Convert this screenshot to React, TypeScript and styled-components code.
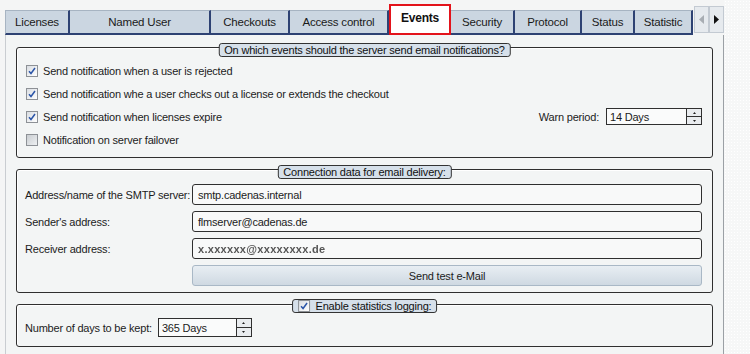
import React from 'react';
import styled, { createGlobalStyle } from 'styled-components';

const GlobalStyle = createGlobalStyle`
  html, body {
    margin: 0;
    padding: 0;
    background: #f4f5f5;
  }
  body {
    font-family: "Liberation Sans", Arial, sans-serif;
    font-size: 11px;
    letter-spacing: -0.2px;
    color: #1c1c1c;
  }
`;

interface TabInfo {
  label: string;
  width: number;
  active?: boolean;
}

const TABS: TabInfo[] = [
  { label: 'Licenses', width: 65 },
  { label: 'Named User', width: 141 },
  { label: 'Checkouts', width: 79 },
  { label: 'Access control', width: 99 },
  { label: 'Events', width: 62, active: true },
  { label: 'Security', width: 64 },
  { label: 'Protocol', width: 67 },
  { label: 'Status', width: 53 },
  { label: 'Statistic', width: 58 },
];

const Screen = styled.div`
  width: 750px;
  height: 354px;
  display: flex;
  overflow: hidden;
  background: #f4f5f5;
`;

const Main = styled.div`
  width: 724px;
  display: flex;
  flex-direction: column;
`;

const SideStrip = styled.div`
  flex: 1;
  background-color: #f6f7f7;
  background-image: radial-gradient(#ffffff 0.6px, transparent 0.7px);
  background-size: 3px 3px;
`;

const TabRow = styled.div`
  height: 35px;
  display: flex;
  align-items: flex-end;
  padding-left: 5px;
`;

const Tab = styled.div<{ $w: number; $first?: boolean }>`
  box-sizing: border-box;
  width: ${(p) => p.$w}px;
  height: 25px;
  background: #cbd6e1;
  border-top: 1px solid #a7b4c2;
  border-left: ${(p) => (p.$first ? '1px solid #a7b4c2' : 'none')};
  border-right: 2px solid #2e4273;
  border-bottom: 2px solid #2e4273;
  display: flex;
  align-items: center;
  justify-content: center;
  font-size: 11.5px;
  color: #1a1a1a;
  white-space: nowrap;
`;

const ActiveTab = styled.div<{ $w: number }>`
  box-sizing: border-box;
  width: ${(p) => p.$w}px;
  height: 31px;
  background: #ffffff;
  border: 2px solid #e3131b;
  display: flex;
  align-items: center;
  justify-content: center;
  padding-bottom: 3px;
  font-size: 12px;
  font-weight: bold;
  color: #111;
`;

const ScrollButtons = styled.div`
  display: flex;
  align-self: flex-end;
  margin-left: 1px;
  margin-bottom: 2px;
  height: 27px;
`;

const ScrollButton = styled.div`
  box-sizing: border-box;
  width: 15px;
  height: 27px;
  background: #e6eaee;
  border: 1px solid #c3cad2;
  display: flex;
  align-items: center;
  justify-content: center;
`;

const Panel = styled.div`
  flex: 1;
  margin-left: 5px;
  background: #f3f5f5;
  border-left: 1px solid #c9cdd1;
  border-right: 1px solid #9ba0a5;
  padding: 12px 10px 0 10px;
  display: flex;
  flex-direction: column;
  gap: 11px;
`;

const Group = styled.div<{ $pad: string }>`
  position: relative;
  border: 1px solid #2f2f2f;
  border-radius: 3px;
  padding: ${(p) => p.$pad};
  box-shadow: inset 1px 1px 0 #ffffff;
`;

const GroupTitle = styled.div<{ $top: number }>`
  position: absolute;
  top: ${(p) => p.$top}px;
  left: 50%;
  transform: translateX(-50%);
  display: flex;
  align-items: center;
  gap: 6px;
  background: #d6e0ea;
  border: 1px solid #333;
  border-radius: 3px;
  padding: 0 5px;
  line-height: 12px;
  white-space: nowrap;
  color: #111;
`;

const CheckRow = styled.div`
  height: 23px;
  display: flex;
  align-items: center;
  gap: 5px;
`;

const Box = styled.span<{ $checked?: boolean }>`
  box-sizing: border-box;
  width: 12px;
  height: 12px;
  flex: none;
  border: 1px solid #8d9196;
  background: ${(p) =>
    p.$checked
      ? 'linear-gradient(135deg, #d9dde2, #ffffff)'
      : 'linear-gradient(135deg, #c9cdd1, #eef0f2)'};
  display: flex;
  align-items: center;
  justify-content: center;
`;

const WarnPeriod = styled.div`
  margin-left: auto;
  display: flex;
  align-items: center;
  gap: 7px;
`;

const Spinner = styled.div<{ $w: number; $h: number }>`
  box-sizing: border-box;
  width: ${(p) => p.$w}px;
  height: ${(p) => p.$h}px;
  border: 1px solid #2f2f2f;
  display: flex;
  background: #fafbfb;
`;

const SpinValue = styled.div`
  flex: 1;
  padding-left: 3px;
  display: flex;
  align-items: center;
`;

const SpinArrows = styled.div`
  width: 14px;
  display: flex;
  flex-direction: column;
  border-left: 1px solid #2f2f2f;
`;

const SpinArrow = styled.div<{ $down?: boolean }>`
  flex: 1;
  background: #e9ecef;
  border-top: ${(p) => (p.$down ? '1px solid #2f2f2f' : 'none')};
  display: flex;
  align-items: center;
  justify-content: center;
`;

const FieldGrid = styled.div`
  display: grid;
  grid-template-columns: 167px 1fr;
  row-gap: 6px;
`;

const FieldLabel = styled.div`
  height: 21px;
  display: flex;
  align-items: center;
`;

const TextField = styled.div`
  box-sizing: border-box;
  height: 21px;
  border: 1px solid #2f2f2f;
  border-radius: 3px;
  background: #f8f9f9;
  padding-left: 5px;
  display: flex;
  align-items: center;
`;

const Scrambled = styled.span`
  display: inline-block;
  color: #555;
  filter: blur(0.6px);
  letter-spacing: 0.3px;
  font-weight: bold;
`;

const SendButton = styled.div`
  grid-column: 2;
  box-sizing: border-box;
  height: 21px;
  border: 1px solid #a9b8c6;
  border-radius: 3px;
  background: linear-gradient(#e8eef3, #cfd9e2);
  display: flex;
  align-items: center;
  justify-content: center;
`;

const DaysRow = styled.div`
  display: flex;
  align-items: center;
  gap: 6px;
`;

const Check = ({ checked }: { checked?: boolean }) => (
  <Box $checked={checked}>
    {checked && (
      <svg width="8" height="8" viewBox="0 0 8 8">
        <path d="M1 4.2 L3 6.5 L7 1" fill="none" stroke="#2b55a8" strokeWidth="1.5" />
      </svg>
    )}
  </Box>
);

const SpinBox = ({ value, w, h }: { value: string; w: number; h: number }) => (
  <Spinner $w={w} $h={h}>
    <SpinValue>{value}</SpinValue>
    <SpinArrows>
      <SpinArrow>
        <svg width="3" height="2" viewBox="0 0 3 2"><path d="M1.5 0 L3 2 L0 2 Z" fill="#222" /></svg>
      </SpinArrow>
      <SpinArrow $down>
        <svg width="3" height="2" viewBox="0 0 3 2"><path d="M0 0 L3 0 L1.5 2 Z" fill="#222" /></svg>
      </SpinArrow>
    </SpinArrows>
  </Spinner>
);

function App() {
  return (
    <>
      <GlobalStyle />
      <Screen>
        <Main>
          <TabRow>
            {TABS.map((t, i) =>
              t.active ? (
                <ActiveTab key={t.label} $w={t.width}>{t.label}</ActiveTab>
              ) : (
                <Tab key={t.label} $w={t.width} $first={i === 0}>{t.label}</Tab>
              )
            )}
            <ScrollButtons>
              <ScrollButton>
                <svg width="5" height="9" viewBox="0 0 5 9"><path d="M5 0 L0 4.5 L5 9 Z" fill="#a8adb3" /></svg>
              </ScrollButton>
              <ScrollButton>
                <svg width="5" height="9" viewBox="0 0 5 9"><path d="M0 0 L5 4.5 L0 9 Z" fill="#111" /></svg>
              </ScrollButton>
            </ScrollButtons>
          </TabRow>
          <Panel>
            <Group $pad="11px 10px 6px 9px">
              <GroupTitle $top={-5}>On which events should the server send email notifications?</GroupTitle>
              <CheckRow>
                <Check checked />
                Send notification when a user is rejected
              </CheckRow>
              <CheckRow>
                <Check checked />
                Send notification whe a user checks out a license or extends the checkout
              </CheckRow>
              <CheckRow>
                <Check checked />
                Send notification when licenses expire
                <WarnPeriod>
                  Warn period:
                  <SpinBox value="14 Days" w={96} h={17} />
                </WarnPeriod>
              </CheckRow>
              <CheckRow>
                <Check />
                Notification on server failover
              </CheckRow>
            </Group>

            <Group $pad="14px 10px 6px 8px">
              <GroupTitle $top={-5}>Connection data for email delivery:</GroupTitle>
              <FieldGrid>
                <FieldLabel>Address/name of the SMTP server:</FieldLabel>
                <TextField>smtp.cadenas.internal</TextField>
                <FieldLabel>Sender's address:</FieldLabel>
                <TextField>flmserver@cadenas.de</TextField>
                <FieldLabel>Receiver address:</FieldLabel>
                <TextField>
                  <Scrambled>x.xxxxxx@xxxxxxxx.de</Scrambled>
                </TextField>
                <SendButton>Send test e-Mail</SendButton>
              </FieldGrid>
            </Group>

            <Group $pad="13px 10px 9px 8px">
              <GroupTitle $top={-6}>
                <Check checked />
                Enable statistics logging:
              </GroupTitle>
              <DaysRow>
                Number of days to be kept:
                <SpinBox value="365 Days" w={94} h={19} />
              </DaysRow>
            </Group>
          </Panel>
        </Main>
        <SideStrip />
      </Screen>
    </>
  );
}

export default App;
